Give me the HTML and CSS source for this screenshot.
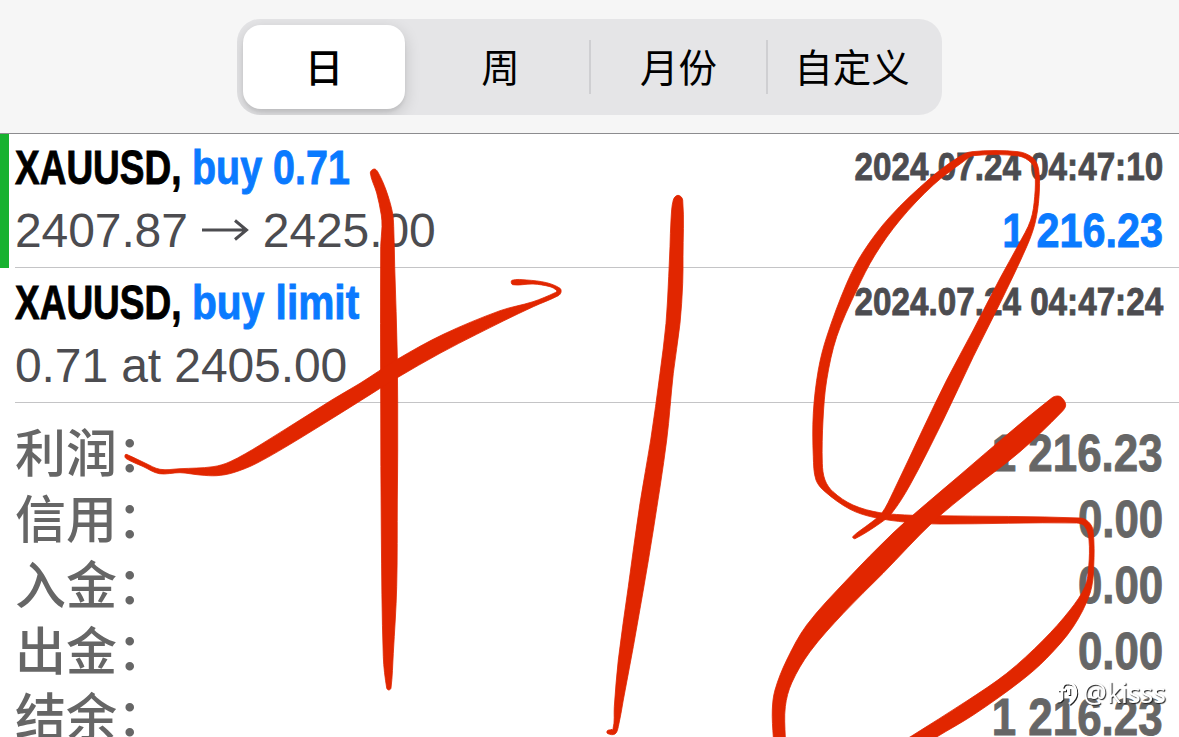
FILE: index.html
```
<!DOCTYPE html>
<html lang="zh-CN">
<head>
 <meta charset="utf-8"/>
 <title>XAUUSD</title>
 <link rel="stylesheet" href="styles.css">
</head>
<body>
<div class="screen">
<header class="toolbar">
 <nav class="segments">
  <span class="segment active">日</span>
  <span class="segment">周</span>
  <span class="segment divided">月份</span>
  <span class="segment divided">自定义</span>
 </nav>
</header>

<main>
 <section class="deal open">
  <div class="line title">
   <span class="symbol"><b class="squeeze">XAUUSD,</b></span>
   <span class="side"><b class="squeeze">buy 0.71</b></span>
   <time class="squeeze">2024.07.24 04:47:10</time>
  </div>
  <div class="line detail">
   <span class="price">2407.87</span>
   <svg class="arrow" width="48" height="24" viewBox="0 0 48 24"><path d="M1 12H45M34 2.500L45.500 12L34 21.500"/></svg>
   <span class="price">2425.00</span>
   <b class="profit squeeze">1 216.23</b>
  </div>
 </section>
 <section class="deal">
  <div class="line title">
   <span class="symbol"><b class="squeeze">XAUUSD,</b></span>
   <span class="side limit"><b class="squeeze">buy limit</b></span>
   <time class="squeeze">2024.07.24 04:47:24</time>
  </div>
  <div class="line detail"><span class="price">0.71 at 2405.00</span></div>
 </section>

 <section class="totals">
  <div class="total"><span>利润：</span><b class="squeeze">1 216.23</b></div>
  <div class="total"><span>信用：</span><b class="squeeze">0.00</b></div>
  <div class="total"><span>入金：</span><b class="squeeze">0.00</b></div>
  <div class="total"><span>出金：</span><b class="squeeze">0.00</b></div>
  <div class="total"><span>结余：</span><b class="squeeze">1 216.23</b></div>
 </section>
</main>

<canvas id="ink" class="ink" width="1179" height="737"></canvas>

<div class="watermark">
 <svg width="24" height="28" viewBox="0 0 24 28">
  <g class="mark-shade"><path d="M14 5.500C9 4 7 8 7 12V21Q5 24 2 23M3 12H11M14 5.500C19 5 21 10 21 15C21 20 18 23 14 26M14 10V17"/></g>
  <g class="mark"><path d="M13 4.500C8 3 6 7 6 11V20Q4 23 1 22M2 11H10M13 4.500C18 4 20 9 20 14C20 19 17 22 13 25M13 9V16"/></g>
 </svg>
 <span>@kisss</span>
</div>
</div>
<script src="ink.js"></script>
</body>
</html>
```
FILE: styles.css
```
* { box-sizing: border-box; }

body {
 margin:      0;
 background:  #fff;
 font-family: "Liberation Sans", "Noto Sans CJK SC", sans-serif;
}

.screen {
 position: relative;
 width:    1179px;
 height:   737px;
 overflow: hidden;
}

.toolbar {
 height:        134px;
 padding:       19px 237px 0;
 background:    #f6f6f6;
 border-bottom: 1px solid #8c8c8f;
}

.segments {
 display:       grid;
 grid-template-columns: 162px 184px 177px 170px;
 width:         705px;
 height:        96px;
 padding:       6px;
 background:    #e5e5e7;
 border-radius: 23px;
 overflow:      hidden;
}

.segment {
 display:         flex;
 align-items:     center;
 justify-content: center;
 position:        relative;
 padding:         0 0 5px 2px;
 font-family:     "Noto Sans CJK SC", sans-serif;
 font-size:       38.500px;
 line-height:     50px;
 color:           #000;
}

.segment.active {
 padding-left:  0;
 background:    #fff;
 border-radius: 18px;
 font-weight:   500;
 box-shadow:    0 5px 16px rgba(0,0,0,.16), 0 3px 3px rgba(0,0,0,.06);
}
.segment.active + .segment { padding-left: 7px; }

.segment.divided::before {
 content:    "";
 position:   absolute;
 left:       0;
 top:        15px;
 width:      2px;
 height:     54px;
 background: #cfcfd2;
}

.squeeze {
 display:     inline-block;
 white-space: pre;
 -webkit-text-stroke: .9px;
}

.deal {
 height:  134px;
 padding: 1px 16px 0 15px;
 background: linear-gradient(#c4c4c6, #c4c4c6) 15px 133px / 100% 1px no-repeat;
}
.deal + .deal { height: 135px; padding-top: 2px; background-position: 15px 134px; }

.deal.open { box-shadow: inset 9px 0 #17b22f; }

.line {
 display:     flex;
 align-items: center;
 height:      64px;
}

.title { font-size: 49px; }

.symbol { width: 177px; }
.symbol .squeeze {
 transform: scaleX(.755);
 transform-origin: left;
}

.side { color: #0a7aff; }
.side .squeeze {
 transform: scaleX(.805);
 transform-origin: left;
}
.side.limit .squeeze { transform: scaleX(.83); }

time {
 margin-left: auto;
 font-size:   39px;
 font-weight: bold;
 color:       #4c4c50;
 transform:   scaleX(.852);
 transform-origin: right;
}

.detail {
 padding-bottom: 2px;
 font-size: 48px;
 color:     #4c4c50;
}

.price { letter-spacing: -.1px; }

.arrow {
 margin: 0 14px 0 13px;
 fill:   none;
 stroke: #4c4c50;
 stroke-width: 3;
}

.profit {
 margin-left: auto;
 color:       #0a7aff;
 transform:   scaleX(.86);
 transform-origin: right;
}

.totals {
 padding: 17px 16px 0 15px;
 color:   #666;
}

.total {
 display:         flex;
 justify-content: space-between;
 align-items:     center;
 height:          66px;
 font-size:       51px;
}

.total span {
 padding-bottom: 7px;
 font-family: "Noto Sans CJK SC", sans-serif;
 font-weight: 500;
 line-height: 66px;
}

.total b {
 transform: scaleX(.86);
 transform-origin: right;
}

.ink {
 position: absolute;
 left: 0;
 top:  0;
}

.watermark {
 position:    absolute;
 right:       13px;
 top:         677px;
 display:     flex;
 align-items: center;
 gap:         3px;
 height:      32px;
 font-family: "Noto Sans", sans-serif;
 font-size:   26.500px;
 color:       #fff;
 text-shadow: 1px 1px 1px #222;
}

.watermark svg { fill: none; stroke-width: 2.500; }
.mark-shade { stroke: #222; }
.mark { stroke: #fff; }
```
FILE: ink.js
```
var ctx = document.getElementById("ink").getContext("2d");

// Outline of each pen stroke as x,y pairs
var strokes = [
 // plus, vertical bar
 [374,169, 377.7,171.7, 386,190, 392.3,211.7, 393.7,226.7, 394.7,266.7, 397.3,356.7,
  397.7,450, 397.3,500, 396.7,586.7, 393.3,653.3, 391,688, 388.7,690, 386.7,688,
  383.3,656.7, 381.3,533, 380.7,400, 380.7,246.7, 382,226.7, 381.3,215, 376.7,193,
  370.3,173],
 // plus, cross bar
 [125.3,454.7, 128.7,455.3, 145,463, 160,469.3, 180,468.7, 213,466.7, 230,461.7, 260,445,
  331.7,400, 360,383.3, 397.3,359.3, 443.3,334.3, 500,310.7, 533,301.7, 555,292.7,
  556.7,290.7, 550,286.7, 533,284, 512.7,284.7, 512,280.3, 526.7,280, 546.7,282.7,
  560,288.3, 561,292.3, 558.3,295.7, 533.3,306.7, 503.3,321, 476.7,334.3, 440,353.3,
  397.3,377.7, 361.7,400, 300,438.3, 256.7,463.3, 233.3,472.7, 216.7,475.7, 200,475,
  180,472.7, 159.3,473.7, 143,466.5, 126,458.5],
 // one
 [678,195.3, 673.3,200, 671,220, 670,246.7, 668.7,276.7, 666,323.3, 660,373.3,
  650.7,440, 640,503.3, 628.3,586.7, 618.3,660, 614.3,706.7, 613,728.7, 607.5,730.5,
  607.5,733.5, 615,734, 618.3,726.7, 623.3,700, 633.3,646.7, 643.3,590, 653.3,530,
  666.7,440, 673.3,373.3, 680,323.3, 682.7,283.3, 683,256.7, 682.7,200],
 // eight, thin loop
 [852.7,536.7, 870,523.3, 881.7,513.3, 893.3,491.7, 923.3,428.3, 946.7,380, 973.3,330,
  1000,278.3, 1018.3,245, 1030.7,220, 1034.7,196.7, 1035,173.3, 1031.7,163.3,
  1018.3,156, 973.3,155.7, 963.3,161.7, 933.3,185, 900,220, 875,255, 856.7,290,
  836.7,336.7, 826.7,380, 823,420, 822.3,463.3, 825,480, 833,491.7, 853,505,
  880,512.7, 913,515.3, 936.7,515.7, 1080,518, 1088.3,521.7, 1093,530, 1093.7,566.7,
  1090,593.3, 1073.3,626.7, 1046.7,658.3, 1020,681.7, 973.3,715, 936.7,737, 925,745,
  897,745, 910,737, 966.7,701, 1006.7,673.3, 1043.3,640, 1070,610, 1085,586.7,
  1088.7,566.7, 1089,540, 1085,526.7, 1076.7,523, 940,524, 906.7,522.3, 873.3,517.3,
  850,509.3, 825,491.7, 816,480, 813.3,456.7, 813.3,413.3, 818.3,370, 826.7,336.7,
  846.7,283.3, 863.3,251.7, 890,216.7, 930,178.3, 958.3,157.3, 971.7,151.7,
  1018.3,151.7, 1033.3,158.3, 1038.7,170, 1039,196.7, 1035,223.3, 1026.7,246.7,
  1000,303.3, 973.3,356.7, 943.3,420, 910,485, 891.7,513.3, 880,523.3, 855,538.7],
 // eight, thick stroke
 [1051.7,398, 1006.7,435, 960,475, 926.7,503.3, 893,533, 846.7,580, 806.7,625,
  786.7,660, 775,690, 772.3,710, 773.3,737, 775,750, 787,750, 785.3,737, 785.3,706.7,
  791.7,683, 810,651.7, 843.3,613.3, 883,573.3, 933.3,521.7, 973.3,488.3, 1020,451.7,
  1061.7,412, 1065.7,405, 1061.7,397.5, 1057,396]
];

// Smooth closed curve through the points
function Draw(p) {
 var n = p.length;
 function at(i) { return p[(i + n) % n]; }
 ctx.beginPath();
 ctx.moveTo(p[0], p[1]);
 for (var i = 0; i < n; i += 2) {
  var x1 = at(i),   y1 = at(i+1);
  var x2 = at(i+2), y2 = at(i+3);
  // handles are a third of the chord, so uneven spacing does not overshoot
  var d = Math.hypot(x2-x1, y2-y1) / 3;
  var ax = x2-at(i-2), ay = y2-at(i-1), a = Math.hypot(ax, ay);
  var bx = at(i+4)-x1, by = at(i+5)-y1, b = Math.hypot(bx, by);
  ctx.bezierCurveTo(x1+ax/a*d, y1+ay/a*d, x2-bx/b*d, y2-by/b*d, x2, y2);
 }
 ctx.fill();
 ctx.stroke();
}

ctx.fillStyle = "#e12600";
ctx.strokeStyle = "#e12600";
ctx.lineWidth = .8;
strokes.forEach(Draw);
```
